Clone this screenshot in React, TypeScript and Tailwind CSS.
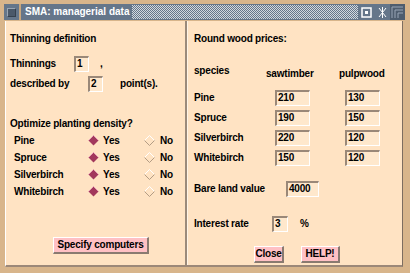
import React from "react"

const species = ["Pine", "Spruce", "Silverbirch", "Whitebirch"]
const prices = [
  ["210", "130"],
  ["190", "150"],
  ["220", "120"],
  ["150", "120"],
]

// radio mark, drawn as a diamond like the old motif toolkit
const Diamond = ({ on }: { on: boolean }) => (
  <svg width="11" height="11" viewBox="0 0 11 11" className="shrink-0">
    {on ? (
      <>
        <polygon points="5.5,0.5 10.5,5.5 5.5,10.5 0.5,5.5" fill="#a2385c" />
        <polyline points="0.5,5.5 5.5,0.5 10.5,5.5" fill="none" stroke="#e6a2b4" />
      </>
    ) : (
      <>
        <polyline points="0.5,5.5 5.5,0.5 10.5,5.5" fill="none" stroke="#ffffff" />
        <polyline points="0.5,5.5 5.5,10.5 10.5,5.5" fill="none" stroke="#b39c84" />
      </>
    )}
  </svg>
)

const Field = ({ value, className }: { value: string; className: string }) => (
  <div
    className={`${className} h-[16px] shrink-0 bg-[#ffe8cc] border-t-2 border-l-2 border-t-[#9a8878] border-l-[#9a8878] border-b border-r border-b-white border-r-white pl-[1px] leading-[12px]`}
  >
    {value}
  </div>
)

const Btn = ({ label, className }: { label: string; className: string }) => (
  <div
    className={`${className} h-[17px] bg-[#ffc0c4] border-t border-l border-t-white border-l-white border-b-2 border-r-2 border-b-[#8a7a70] border-r-[#8a7a70] flex items-center justify-center leading-[12px]`}
  >
    {label}
  </div>
)

export default function App() {
  return (
    <div className="w-[410px] h-[273px] bg-[#d8b58b] overflow-hidden font-['Liberation_Sans',Arial,sans-serif] font-bold text-[10px] tracking-[-0.2px] text-black">
      {/* title bar */}
      <div className="ml-[4px] mt-[4px] w-[401px] h-[16px] flex">
        <div className="w-[15px] h-full bg-[#65768a] flex items-center justify-center">
          <div className="w-[9px] h-[9px] bg-[#4b596a] border border-t-[#9aa6b4] border-l-[#9aa6b4] border-b-[#36414e] border-r-[#36414e]" />
        </div>
        <div className="w-[2px] h-full bg-[#c9a67c]" />
        <div className="flex-1 h-full bg-[#65768a] flex items-center">
          <span className="pl-[4px] pr-[3px] text-white text-[10px] tracking-[0px] leading-[16px]">
            SMA: managerial data
          </span>
          <div className="flex-1 h-[14px] bg-[repeating-conic-gradient(#65768a_0_25%,#d2d8de_0_50%)] bg-[length:2px_2px]" />
          <div className="w-[32px] h-full flex items-center justify-around">
            <svg width="11" height="11" viewBox="0 0 11 11">
              <rect x="1" y="1" width="9" height="9" fill="none" stroke="#ffffff" strokeWidth="1.5" />
              <rect x="4" y="4" width="3" height="3" fill="#ffffff" />
            </svg>
            <svg width="9" height="11" viewBox="0 0 9 11">
              <path d="M1 1 L4.5 5.5 L1 10 M8 1 L4.5 5.5 L8 10 M4.5 0 V11" fill="none" stroke="#ffffff" strokeWidth="1" />
            </svg>
          </div>
        </div>
        <div className="w-[15px] h-full bg-[#4e5d6e] flex items-center justify-center">
          <svg width="13" height="13" viewBox="0 0 13 13">
            <path d="M1 12 V1 H12 M4 12 V4 H12 M7 12 V7 H12" fill="none" stroke="#98a6b6" strokeWidth="1" />
          </svg>
        </div>
      </div>

      {/* body */}
      <div className="ml-[5px] mt-[1px] w-[398px] h-[246px] flex bg-[#ffe3c3] border-l border-l-white border-b-2 border-b-[#9c8878] border-r border-r-[#7d6d60]">
        {/* left panel */}
        <div className="w-[179px] h-full pl-[4px] pt-[12px] flex flex-col">
          <div className="h-[12px] leading-[12px]">Thinning definition</div>
          <div className="mt-[11px] h-[16px] flex items-center">
            <span className="w-[64px] leading-[12px]">Thinnings</span>
            <Field value="1" className="w-[15px]" />
            <span className="ml-[11px] leading-[12px]">,</span>
          </div>
          <div className="mt-[4px] h-[16px] flex items-center">
            <span className="w-[78px] leading-[12px]">described by</span>
            <Field value="2" className="w-[15px]" />
            <span className="ml-[17px] leading-[12px]">point(s).</span>
          </div>
          <div className="mt-[26px] h-[12px] leading-[12px]">Optimize planting density?</div>
          <div className="mt-[2px] flex flex-col">
            {species.map((s) => (
              <div key={s} className="h-[17px] flex items-center pl-[4px]">
                <span className="w-[74px] leading-[12px]">{s}</span>
                <Diamond on />
                <span className="ml-[4px] w-[41px] leading-[12px]">Yes</span>
                <Diamond on={false} />
                <span className="ml-[5px] leading-[12px]">No</span>
              </div>
            ))}
          </div>
          <div className="mt-[37px] ml-[43px] flex">
            <Btn label="Specify computers" className="w-[96px]" />
          </div>
        </div>

        {/* divider */}
        <div className="w-[2px] h-full bg-[#9b8a7a]" />
        <div className="w-[1px] h-full bg-[#fff4e6]" />

        {/* right panel */}
        <div className="flex-1 h-full pl-[6px] pt-[12px] flex flex-col">
          <div className="h-[12px] leading-[12px]">Round wood prices:</div>
          <div className="mt-[20px] h-[16px] flex items-start">
            <span className="w-[72px] leading-[12px]">species</span>
            <span className="w-[73px] mt-[3px] leading-[12px]">sawtimber</span>
            <span className="mt-[3px] leading-[12px]">pulpwood</span>
          </div>
          <div className="mt-[9px] flex flex-col gap-[4px]">
            {species.map((s, i) => (
              <div key={s} className="h-[16px] flex items-center">
                <span className="w-[81px] leading-[12px]">{s}</span>
                <Field value={prices[i][0]} className="w-[35px]" />
                <Field value={prices[i][1]} className="ml-[35px] w-[35px]" />
              </div>
            ))}
          </div>
          <div className="mt-[15px] h-[16px] flex items-center">
            <span className="w-[92px] leading-[12px]">Bare land value</span>
            <Field value="4000" className="w-[33px]" />
          </div>
          <div className="mt-[19px] h-[16px] flex items-center">
            <span className="w-[78px] leading-[12px]">Interest rate</span>
            <Field value="3" className="w-[16px]" />
            <span className="ml-[12px] leading-[12px]">%</span>
          </div>
          <div className="mt-[14px] flex">
            <Btn label="Close" className="ml-[60px] w-[30px]" />
            <Btn label="HELP!" className="ml-[17px] w-[39px]" />
          </div>
        </div>
      </div>
    </div>
  )
}
